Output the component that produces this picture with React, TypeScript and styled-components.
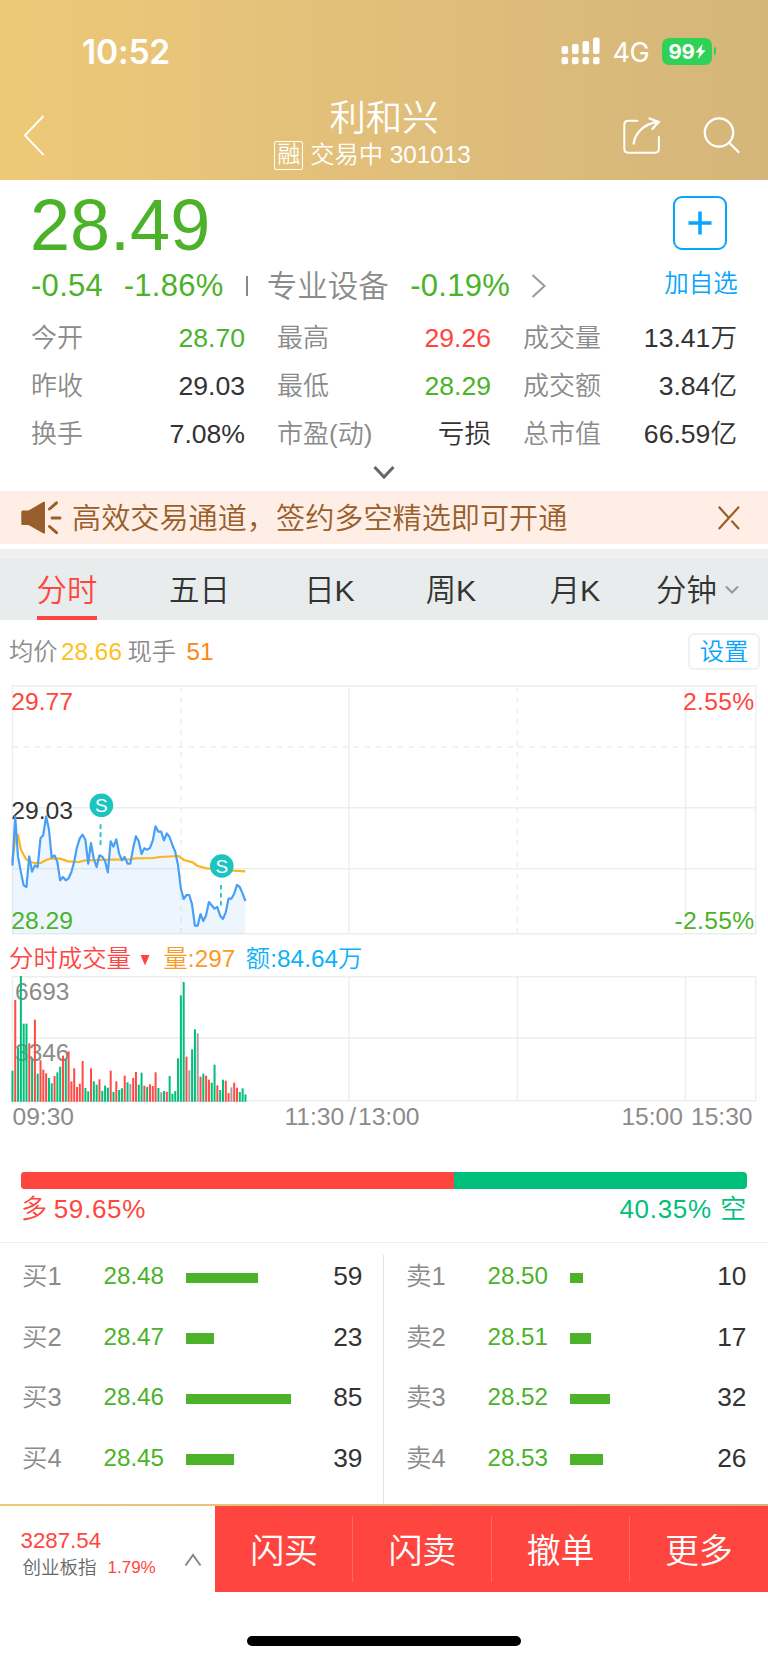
import React from "react";
import styled, { createGlobalStyle } from "styled-components";

const RED = "#ff4540";
const GREEN = "#4bb22a";
const BLUE = "#07a5fb";
const GREY = "#8b8b8b";
const DARK = "#333333";
const TEAL = "#00bf7b";
const GRID = "#eeeeee";
const GOLD = "linear-gradient(90deg, #edc977 0%, #e1bf7b 50%, #d5b67a 100%)";

const Global = createGlobalStyle`
  * { box-sizing: border-box; }
  body {
    margin: 0;
    background: #fff;
    color: ${DARK};
    font-family: "Liberation Sans", "Noto Sans CJK SC", sans-serif;
    font-weight: 350;
  }
`;

const Page = styled.main`
  width: 768px;
  height: 1663px;
  display: flex;
  flex-direction: column;
  background: #fff;
  overflow: hidden;
  white-space: nowrap;
`;

/* header */
const Header = styled.header`
  height: 180px;
  background: ${GOLD};
  color: #fff;
  display: flex;
  flex-direction: column;
`;
const StatusBar = styled.div`
  height: 96px;
  padding: 6px 52px 0 82px;
  display: flex;
  align-items: center;
  justify-content: space-between;
  font-family: Inter, sans-serif;
`;
const Clock = styled.span`
  font-size: 33.6px;
  font-weight: 600;
  letter-spacing: -0.2px;
`;
const StatusIcons = styled.div`
  display: flex;
  align-items: center;
`;
const Network = styled.span`
  font-size: 27px;
  font-weight: 400;
  margin: 3px 13px 0 13px;
  letter-spacing: -0.6px;
`;
const Battery = styled.div`
  width: 50px;
  height: 27px;
  border-radius: 7px;
  background: #30d158;
  display: flex;
  align-items: center;
  justify-content: center;
  font-size: 20.5px;
  font-weight: 700;
  letter-spacing: -0.3px;
`;
const BatteryTip = styled.i`
  width: 2.5px;
  height: 8px;
  margin-left: 1.5px;
  border-radius: 0 3px 3px 0;
  background: #30d158;
`;
const TitleBar = styled.div`
  height: 84px;
  display: grid;
  grid-template-columns: 200px 1fr 200px;
`;
const TitleSide = styled.div<{ $end?: boolean }>`
  display: flex;
  padding: ${(p) => (p.$end ? "20px 27px 0 0" : "18px 0 0 22px")};
  justify-content: ${(p) => (p.$end ? "flex-end" : "flex-start")};
  gap: 41px;
`;
const TitleText = styled.div`
  display: flex;
  flex-direction: column;
  align-items: center;
  padding-top: 2px;
`;
const StockName = styled.h1`
  margin: 0 0 -1px;
  font-size: 36.4px;
  font-weight: 350;
  line-height: 42px;
`;
const StockMeta = styled.div`
  display: flex;
  align-items: center;
  gap: 7px;
  font-size: 24.3px;
  line-height: 32px;
  margin-left: -23px;
`;
const MarginTag = styled.span`
  width: 29px;
  height: 29px;
  border: 1.5px solid #fff;
  border-radius: 2px;
  font-size: 23px;
  line-height: 25px;
  text-align: center;
  display: flex;
  justify-content: center;
`;

/* quote */
const Quote = styled.section`
  height: 311px;
  padding: 0 31px;
  display: flex;
  flex-direction: column;
`;
const PriceRow = styled.div`
  display: flex;
  justify-content: space-between;
  height: 134px;
`;
const PriceBlock = styled.div`
  display: flex;
  flex-direction: column;
`;
const LastPrice = styled.div`
  font-size: 72px;
  line-height: 82px;
  margin: 4px 0 2px -1px;
  color: ${GREEN};
`;
const ChangeLine = styled.div`
  display: flex;
  align-items: center;
  height: 36px;
  font-size: 31px;
  line-height: 36px;
  color: ${GREEN};
`;
const Change = styled.span<{ $gap: number }>`
  margin-right: ${(p) => p.$gap}px;
  letter-spacing: 0.3px;
`;
const Rule = styled.i`
  width: 1.5px;
  height: 20px;
  background: #888;
  margin-right: 19px;
`;
const Sector = styled.span`
  font-size: 30.5px;
  color: ${GREY};
  margin-right: 21.5px;
`;
const Favourite = styled.div`
  width: 76px;
  display: flex;
  flex-direction: column;
  align-items: center;
  padding-top: 16px;
  margin-right: -2px;
  font-size: 24.5px;
  line-height: 34px;
  color: ${BLUE};
`;
const AddButton = styled.button`
  width: 54px;
  height: 54px;
  padding: 0;
  border: 2px solid ${BLUE};
  border-radius: 9px;
  background: #fff;
  display: flex;
  align-items: center;
  justify-content: center;
  margin: 0 0 17px -2px;
`;
const Stats = styled.div`
  display: grid;
  grid-template-columns: repeat(3, 214px);
  grid-auto-rows: 48px;
  column-gap: 32px;
`;
const Stat = styled.div`
  display: flex;
  justify-content: space-between;
  align-items: center;
  font-size: 26px;
  line-height: 48px;
`;
const StatLabel = styled.span`
  color: ${GREY};
`;
const StatValue = styled.span<{ $color?: string }>`
  font-size: 26.6px;
  color: ${(p) => p.$color ?? DARK};
`;
const ExpandRow = styled.div`
  display: flex;
  justify-content: center;
  padding-top: 7px;
`;

/* notice and tabs */
const Notice = styled.section`
  height: 53px;
  background: #ffeee5;
  display: flex;
  align-items: center;
  padding: 0 27px 0 20px;
  color: #985e2b;
  font-size: 29.15px;
  line-height: 53px;
`;
const NoticeText = styled.span`
  flex: 1;
  margin-left: 9px;
  padding-top: 4px;
`;
const Tabs = styled.nav`
  height: 76px;
  border-top: 5px solid #fff;
  display: grid;
  grid-template-columns: 134px 131px 129px 114px 134px 111px;
  background: linear-gradient(#f0f0f0 10px, #e8ecec 10px);
  padding-top: 10px;
`;
const Tab = styled.div`
  display: flex;
  justify-content: center;
  align-items: center;
  gap: 8px;
  font-size: 30.4px;
`;
const TabLabel = styled.span<{ $active?: boolean }>`
  height: 61px;
  line-height: 61px;
  padding-top: 1px;
  color: ${(p) => (p.$active ? RED : DARK)};
  box-shadow: ${(p) => (p.$active ? `inset 0 -4px ${RED}` : "none")};
`;

/* charts */
const InfoLine = styled.div`
  height: 65px;
  display: flex;
  align-items: center;
  padding: 0 8px 3px 9px;
  font-size: 24.3px;
  line-height: 35px;
  color: ${GREY};
`;
const Tinted = styled.span<{ $color: string; $left?: number; $right?: number }>`
  color: ${(p) => p.$color};
  margin: 0 ${(p) => p.$right ?? 0}px 0 ${(p) => p.$left ?? 0}px;
`;
const Settings = styled.button`
  margin: 1px 0 0 auto;
  width: 72px;
  height: 37px;
  padding: 0;
  border: 2px solid #f0f0f0;
  border-radius: 6px;
  background: #fff;
  color: ${BLUE};
  font: inherit;
  line-height: 32px;
`;
const Chart = styled.svg`
  display: block;
  flex: none;
  font-family: "Liberation Sans", sans-serif;
`;
const VolumeLine = styled.div`
  height: 41px;
  display: flex;
  align-items: center;
  padding: 6px 9px 0;
  font-size: 24.4px;
  line-height: 35px;
  color: ${RED};
`;
const MenuArrow = styled.svg`
  margin: 4px 0 0 9.5px;
`;
const TimeAxis = styled.div`
  height: 69px;
  display: grid;
  grid-template-columns: 200px 279px 1fr;
  padding: 0 15.5px 0 12.5px;
  font-size: 24.6px;
  line-height: 30px;
  color: ${GREY};
`;
const TimeMid = styled.div`
  display: flex;
  justify-content: center;
  gap: 5px;
`;
const TimeSlash = styled.span`
  margin-right: 2px;
`;
const TimeEnd = styled.div`
  display: flex;
  justify-content: flex-end;
  gap: 8px;
`;

/* long / short ratio */
const Ratio = styled.section`
  height: 72px;
  padding: 1px 21px 0;
  border-bottom: 1.5px solid #eee;
`;
const RatioTrack = styled.div`
  height: 17px;
  border-radius: 4px;
  overflow: hidden;
  display: flex;
  background: ${TEAL};
`;
const RatioFill = styled.div`
  background: ${RED};
`;
const RatioLabels = styled.div`
  display: flex;
  justify-content: space-between;
  font-size: 26px;
  line-height: 40px;
`;
const RatioLabel = styled.span<{ $color: string; $gap: number }>`
  display: flex;
  gap: ${(p) => p.$gap}px;
  letter-spacing: 0.7px;
  color: ${(p) => p.$color};
`;

/* order book */
const Book = styled.section`
  height: 261px;
  display: grid;
  grid-template-columns: 384px 384px;
`;
const BookSide = styled.div<{ $divided?: boolean }>`
  padding-top: 3px;
  background: ${(p) =>
    p.$divided ? "linear-gradient(#e3e3e3, #e3e3e3) 383px 12px / 1px 100% no-repeat" : "none"};
`;
const Level = styled.div`
  height: 60.6px;
  display: grid;
  grid-template-columns: 81.5px 82.5px 1fr auto;
  align-items: center;
  padding: 0 21.5px 0 22px;
  font-size: 26.3px;
  line-height: 30px;
`;
const LevelName = styled.span`
  height: 30px;
  font-size: 25.5px;
  color: ${GREY};
`;
const LevelPrice = styled.span`
  font-size: 24.2px;
  color: ${GREEN};
`;
const LevelBar = styled.div`
  height: 10.5px;
  margin-top: 3px;
  background: ${GREEN};
`;

/* bottom bar */
const Bottom = styled.footer`
  height: 88px;
  display: grid;
  grid-template-columns: 215px 1fr;
  background: ${GOLD} top / 100% 2px no-repeat;
  padding-top: 2px;
`;
const IndexBox = styled.div`
  display: flex;
  justify-content: space-between;
  padding: 21px 13px 0 20.5px;
  color: ${RED};
`;
const IndexValue = styled.div`
  font-size: 22.3px;
  line-height: 28px;
`;
const IndexMeta = styled.div`
  display: flex;
  align-items: center;
  gap: 11px;
  margin-left: 2px;
  font-size: 17px;
  line-height: 26px;
`;
const IndexName = styled.span`
  font-size: 18.5px;
  color: #666;
`;
const CollapseIcon = styled.svg`
  margin-top: 26px;
`;
const Actions = styled.div`
  display: grid;
  grid-template-columns: repeat(4, 1fr);
  background: ${RED};
`;
const Action = styled.button<{ $last?: boolean }>`
  border: 0;
  padding: 0 0 2px;
  color: #fff;
  font: inherit;
  font-size: 34px;
  background: ${(p) =>
    p.$last ? "none" : "linear-gradient(#ff6a66, #ff6a66) right center / 1px 66px no-repeat"};
`;
const HomeIndicator = styled.div`
  width: 274px;
  height: 10px;
  border-radius: 5px;
  background: #000;
  margin: 44px auto 0;
`;

const stats: [string, string, string?][] = [
  ["今开", "28.70", GREEN],
  ["最高", "29.26", RED],
  ["成交量", "13.41万"],
  ["昨收", "29.03"],
  ["最低", "28.29", GREEN],
  ["成交额", "3.84亿"],
  ["换手", "7.08%"],
  ["市盈(动)", "亏损"],
  ["总市值", "66.59亿"],
];

/* one price sample per minute, measured down from the top of the plot in thirds of a pixel */
const prices = [
  572, 425, 545, 590, 631, 636, 544, 590, 571, 576, 490, 480, 424, 462, 547, 541, 560, 616, 606, 616,
  610, 592, 560, 517, 490, 479, 494, 566, 504, 552, 576, 541, 545, 558, 592, 499, 515, 493, 535, 556,
  546, 566, 566, 520, 484, 499, 537, 520, 524, 519, 497, 454, 470, 470, 496, 475, 486, 510, 530, 570,
  640, 672, 660, 660, 688, 752, 752, 717, 738, 721, 681, 691, 701, 696, 722, 732, 712, 671, 671, 656,
  630, 636, 655, 678,
];
const average: [number, number][] = [
  [37, 560], [47, 482], [54, 480], [63, 525], [78, 552], [92, 561], [104, 564], [122, 564],
  [138, 555], [150, 551], [180, 551], [205, 559], [238, 561], [250, 557], [290, 555], [340, 554],
  [390, 553], [405, 550], [460, 549], [480, 546], [535, 543], [552, 555], [578, 562], [593, 573],
  [620, 580], [660, 583], [700, 587], [736, 589],
];
const volumes =
  "g392 r180 g323 g108 g251 g251 r310 g358 r239 g401 r361 r389 r400 g414 g430 r408 g397 g380 r347 g357 " +
  "r334 r424 r385 r441 r431 r363 g444 g454 r385 g424 g434 r418 g453 g437 g443 r392 g456 r424 g450 g445 " +
  "r407 g427 x432 r414 r396 g434 g398 r437 g441 r433 r438 r397 g444 x457 g453 r455 g408 g461 g453 g355 " +
  "g166 g126 r350 x391 g328 g268 x280 r410 g401 r407 r419 g428 g374 r436 g450 g419 r422 r459 x442 r428 " +
  "r443 g456 g445 g463";
const barColor: Record<string, string> = { r: "#ff4b46", g: TEAL, x: "#a0a0a0" };

const sampleX = (i: number) => 12.4 + i * 2.807;
const py = (v: number) => v / 3 - 10;
const line = prices.map((v, i) => `${sampleX(i).toFixed(2)},${py(v).toFixed(2)}`).join(" ");
const avgLine = average.map(([x, y]) => `${(x / 3).toFixed(2)},${py(y).toFixed(2)}`).join(" ");

const Marker = ({ x, y }: { x: number; y: number }) => (
  <g>
    <circle cx={x} cy={y} r={11.8} fill="#1cc4c0" />
    <text x={x} y={y + 6.8} fontSize={19} fill="#fff" textAnchor="middle">S</text>
    <path d={`M${x - 0.9} ${y + 19}v21`} stroke="#1cc4c0" strokeWidth={1.8} strokeDasharray="4.6 3.4" />
  </g>
);

const PriceChart = () => (
  <Chart width={768} height={250} viewBox="0 0 768 250">
    <g fill="none" stroke={GRID} strokeWidth={1.5}>
      <path d="M12.5 1H755.7V248.8H12.5ZM12.5 122.7H755.7M12.5 183.7H755.7M349 1V249M685.5 1V249" />
      <path d="M12.5 62H755.7M181 1V249M517.4 1V249" strokeDasharray="5.5 5.5" />
    </g>
    <polygon points={`12.4,248.8 ${line} ${sampleX(83)},248.8`} fill="#4aa3f5" fillOpacity={0.1} />
    <g fontSize={24.7}>
      <text x={11.2} y={24.5} fill={RED}>29.77</text>
      <text x={11.2} y={134} fill={DARK}>29.03</text>
      <text x={11.2} y={244} fill={GREEN}>28.29</text>
      <text x={754.5} y={24.7} fill={RED} textAnchor="end" letterSpacing={0.3}>2.55%</text>
      <text x={754.5} y={244} fill={GREEN} textAnchor="end" letterSpacing={0.3}>-2.55%</text>
    </g>
    <polyline points={avgLine} fill="none" stroke="#fdb51c" strokeWidth={2.2} strokeLinejoin="round" />
    <polyline points={line} fill="none" stroke="#47a0f6" strokeWidth={2.2} strokeLinejoin="round" />
    <Marker x={101.4} y={120.3} />
    <Marker x={221.8} y={181} />
  </Chart>
);

const VolumeChart = () => (
  <Chart width={768} height={126} viewBox="0 0 768 126">
    <path
      d="M12.5 .8H755.7V124.8H12.5ZM12.5 62H755.7M181 1V124M349 1V124M517.4 1V124M685.5 1V124"
      fill="none"
      stroke={GRID}
      strokeWidth={1.5}
    />
    <g fontSize={24.4} fill={GREY}>
      <text x={15.1} y={24.2}>6693</text>
      <text x={15.1} y={85.2}>3346</text>
    </g>
    {volumes.split(" ").map((v, i) => {
      const top = Number(v.slice(1)) / 3 - 36;
      return (
        <rect key={i} x={sampleX(i) - 0.95} y={top} width={2} height={125.8 - top} fill={barColor[v[0]]} />
      );
    })}
  </Chart>
);

const bids: [string, string, number, number][] = [
  ["买1", "28.48", 72, 59],
  ["买2", "28.47", 28, 23],
  ["买3", "28.46", 105, 85],
  ["买4", "28.45", 48, 39],
];
const asks: [string, string, number, number][] = [
  ["卖1", "28.50", 13, 10],
  ["卖2", "28.51", 21, 17],
  ["卖3", "28.52", 40, 32],
  ["卖4", "28.53", 33, 26],
];

const Levels = ({ rows, divided }: { rows: typeof bids; divided?: boolean }) => (
  <BookSide $divided={divided}>
    {rows.map(([name, price, width, amount]) => (
      <Level key={name}>
        <LevelName>{name}</LevelName>
        <LevelPrice>{price}</LevelPrice>
        <LevelBar style={{ width }} />
        <span>{amount}</span>
      </Level>
    ))}
  </BookSide>
);

const SignalIcon = () => (
  <svg width="40" height="28" viewBox="0 0 40 28" fill="#fff">
    {[9, 7, 4, 0.5].map((top, i) => (
      <g key={top}>
        <rect x={1.5 + i * 10.5} y={top} width={6.6} height={17 - top} rx={2} />
        <rect x={1.5 + i * 10.5} y={20} width={6.6} height={7.3} rx={2} />
      </g>
    ))}
  </svg>
);

export default function App() {
  return (
    <Page>
      <Global />
      <Header>
        <StatusBar>
          <Clock>10:52</Clock>
          <StatusIcons>
            <SignalIcon />
            <Network>4G</Network>
            <Battery>
              99
              <svg width="11" height="15" viewBox="0 0 11 15" fill="#fff">
                <path d="M7.6 0 .4 8.4h4L2.9 15l7.7-8.8H6.4Z" />
              </svg>
            </Battery>
            <BatteryTip />
          </StatusIcons>
        </StatusBar>
        <TitleBar>
          <TitleSide>
            <svg width="24" height="42" viewBox="0 0 24 42" fill="none" stroke="#fff" strokeWidth="1.9">
              <path d="M21.5 2 3 21.3 21.5 41" />
            </svg>
          </TitleSide>
          <TitleText>
            <StockName>利和兴</StockName>
            <StockMeta>
              <MarginTag>融</MarginTag>
              <span>交易中 301013</span>
            </StockMeta>
          </TitleText>
          <TitleSide $end>
            <svg width="40" height="40" viewBox="622 116 40 40" fill="none" stroke="#fff" strokeWidth="2" strokeLinecap="round">
              <path d="M637.5 120.8H628.5Q624.3 120.8 624.3 125V148.5Q624.3 152.7 628.5 152.7H654.7Q658.9 152.7 658.9 148.5V137" />
              <path d="M633.7 143.5C635 134 643 123.5 658.5 122M649.5 118.5L658.7 122L652.5 128.8" strokeWidth="2.3" />
            </svg>
            <svg width="38" height="40" viewBox="703 116 38 40" fill="none" stroke="#fff" strokeWidth="2.3" strokeLinecap="round">
              <circle cx="719" cy="132.5" r="14.2" />
              <path d="M729 142.5L738.5 152" />
            </svg>
          </TitleSide>
        </TitleBar>
      </Header>

      <Quote>
        <PriceRow>
          <PriceBlock>
            <LastPrice>28.49</LastPrice>
            <ChangeLine>
              <Change $gap={20.5}>-0.54</Change>
              <Change $gap={22.5}>-1.86%</Change>
              <Rule />
              <Sector>专业设备</Sector>
              <Change $gap={21}>-0.19%</Change>
              <svg width="16" height="26" viewBox="0 0 16 26" fill="none" stroke="#999" strokeWidth="2">
                <path d="M1.5 2 13.5 13 1.5 24" />
              </svg>
            </ChangeLine>
          </PriceBlock>
          <Favourite>
            <AddButton aria-label="加自选">
              <svg width="24" height="24" viewBox="0 0 24 24" stroke={BLUE} strokeWidth="3.5">
                <path d="M.5 12H23.5M12 .5V23.5" />
              </svg>
            </AddButton>
            加自选
          </Favourite>
        </PriceRow>
        <Stats>
          {stats.map(([label, value, color]) => (
            <Stat key={label}>
              <StatLabel>{label}</StatLabel>
              <StatValue $color={color}>{value}</StatValue>
            </Stat>
          ))}
        </Stats>
        <ExpandRow>
          <svg width="22" height="15" viewBox="0 0 22 15" fill="none" stroke="#666" strokeWidth="3">
            <path d="M1.5 2 11 12 20.5 2" />
          </svg>
        </ExpandRow>
      </Quote>

      <Notice>
        <svg width="43" height="36" viewBox="20 500 43 36" fill="#985e2b">
          <path d="M22.5 510.5H28.5L43.5 501.8Q45 501.5 45 503V532.5Q45 534 43.5 533.5L28.5 525H22.5Q21.3 525 21.3 523.5V512Q21.3 510.5 22.5 510.5Z" />
          <path d="M49.5 509 56.5 502.8M52 518H60M49.5 526.5 56.5 532.7" stroke="#985e2b" strokeWidth="3" strokeLinecap="round" />
        </svg>
        <NoticeText>高效交易通道，签约多空精选即可开通</NoticeText>
        <svg width="24" height="26" viewBox="0 0 24 26" fill="none" stroke="#985e2b" strokeWidth="2.2">
          <path d="M1.8 1.8 11.5 12.5M14.5 15.8 22 24M22 1.8 1.8 24" />
        </svg>
      </Notice>

      <Tabs>
        {["分时", "五日", "日K", "周K", "月K", "分钟"].map((name, i) => (
          <Tab key={name}>
            <TabLabel $active={i === 0}>{name}</TabLabel>
            {i === 5 && (
              <svg width="14" height="10" viewBox="0 0 14 10" fill="none" stroke="#999" strokeWidth="2.1">
                <path d="M1 1.5 7 7.5 13 1.5" />
              </svg>
            )}
          </Tab>
        ))}
      </Tabs>

      <InfoLine>
        均价
        <Tinted $color="#fcc21b" $left={3.5} $right={5.5}>28.66</Tinted>
        现手
        <Tinted $color="#ff8610" $left={10.5}>51</Tinted>
        <Settings>设置</Settings>
      </InfoLine>

      <PriceChart />

      <VolumeLine>
        分时成交量
        <MenuArrow width="10" height="11" viewBox="0 0 10 11" fill={RED}>
          <path d="M.5 0H9.5L5 10.5Z" />
        </MenuArrow>
        <Tinted $color="#fd9a26" $left={13} $right={10.5}>量:297</Tinted>
        <Tinted $color="#0db1f7">额:84.64万</Tinted>
      </VolumeLine>

      <VolumeChart />

      <TimeAxis>
        <span>09:30</span>
        <TimeMid>
          <span>11:30</span>
          <span>
            <TimeSlash>/</TimeSlash>13:00
          </span>
        </TimeMid>
        <TimeEnd>
          <span>15:00</span>
          <span>15:30</span>
        </TimeEnd>
      </TimeAxis>

      <Ratio>
        <RatioTrack>
          <RatioFill style={{ width: "59.65%" }} />
        </RatioTrack>
        <RatioLabels>
          <RatioLabel $color={RED} $gap={6}>
            <span>多</span>
            <span>59.65%</span>
          </RatioLabel>
          <RatioLabel $color={TEAL} $gap={8.5}>
            <span>40.35%</span>
            <span>空</span>
          </RatioLabel>
        </RatioLabels>
      </Ratio>

      <Book>
        <Levels rows={bids} divided />
        <Levels rows={asks} />
      </Book>

      <Bottom>
        <IndexBox>
          <div>
            <IndexValue>3287.54</IndexValue>
            <IndexMeta>
              <IndexName>创业板指</IndexName>
              <span>1.79%</span>
            </IndexMeta>
          </div>
          <CollapseIcon width="18" height="14" viewBox="0 0 18 14" fill="none" stroke="#888" strokeWidth="2">
            <path d="M1.5 12.5 9 2 16.5 12.5" />
          </CollapseIcon>
        </IndexBox>
        <Actions>
          {["闪买", "闪卖", "撤单", "更多"].map((name, i) => (
            <Action key={name} $last={i === 3}>{name}</Action>
          ))}
        </Actions>
      </Bottom>
      <HomeIndicator />
    </Page>
  );
}
